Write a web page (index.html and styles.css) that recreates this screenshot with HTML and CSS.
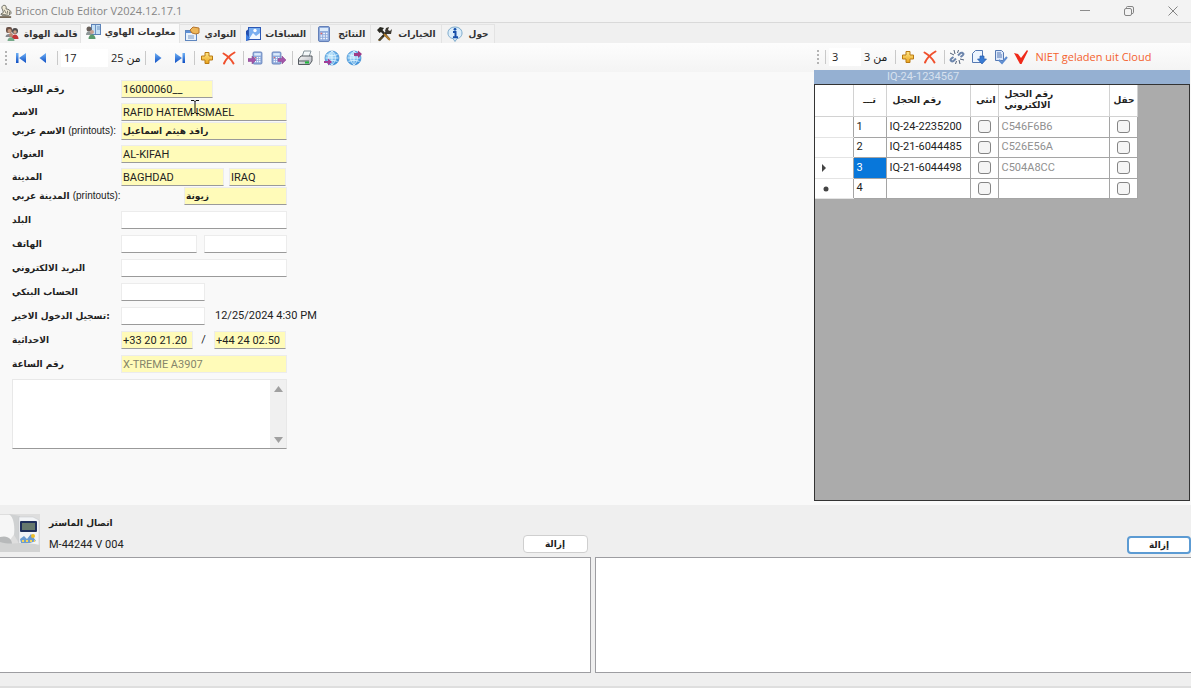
FILE: index.html
```html
<!DOCTYPE html>
<html lang="ar">
<head>
<meta charset="utf-8">
<title>Bricon Club Editor V2024.12.17.1</title>
<link rel="stylesheet" href="styles.css">
</head>
<body>
<svg class="defs" aria-hidden="true">
  <defs>
    <linearGradient id="blue" x1="0" y1="0" x2="0" y2="1"><stop offset="0" stop-color="#6fb1f5"/><stop offset="1" stop-color="#0f4fc4"/></linearGradient>
    <linearGradient id="gold" x1="0" y1="0" x2="0" y2="1"><stop offset="0" stop-color="#ffe888"/><stop offset="1" stop-color="#e9a31c"/></linearGradient>
    <radialGradient id="sky" cx=".4" cy=".35" r=".7"><stop offset="0" stop-color="#c4ecff"/><stop offset="1" stop-color="#2c86d8"/></radialGradient>
    <linearGradient id="grey" x1="0" y1="0" x2="1" y2="1"><stop offset="0" stop-color="#fafafa"/><stop offset="1" stop-color="#aeb2ba"/></linearGradient>
  </defs>
  <symbol id="plus" viewBox="0 0 16 16"><path d="M6 2.500h4V6h3.500v4H10v3.500H6V10H2.500V6H6z" fill="url(#gold)" stroke="#b97a14"/></symbol>
  <symbol id="cross" viewBox="0 0 16 16"><path d="M2.500 3.500C6 5.500 10 9 12.500 13.500M13.500 2.500C9 5 5 9 3 13.500" fill="none" stroke="#f0502d" stroke-width="2" stroke-linecap="round"/></symbol>
  <symbol id="calc" viewBox="0 0 16 16"><rect x="2.500" y=".5" width="11" height="15" rx="1.500" fill="#8fabdc" stroke="#6480b8"/><rect x="4" y="2" width="8" height="3" fill="#dcebfb"/><path d="M4.500 7.500h7M4.500 10h7M4.500 12.500h7" stroke="#f5f8ff" stroke-width="1.500" stroke-dasharray="1.700 1"/><path d="M4.500 7.500h1.700" stroke="#d66" stroke-width="1.500"/></symbol>
  <symbol id="globe" viewBox="0 0 16 16"><circle cx="8" cy="8" r="7" fill="url(#sky)" stroke="#3b8bd0" stroke-width=".7"/><path d="M1.500 8h13M8 1v14M2.500 4.500c3 1.500 8 1.500 11 0M2.500 11.500c3-1.500 8-1.500 11 0M8 1c-4.500 4-4.500 10 0 14M8 1c4.500 4 4.500 10 0 14" fill="none" stroke="#e3f6ff" stroke-width=".8"/></symbol>
  <symbol id="people" viewBox="0 0 16 16"><rect x="2" y="1" width="6" height="6" rx="2" fill="#6b5147"/><circle cx="5.500" cy="5" r="2" fill="#c79a80"/><path d="M1.500 11c0-4 7-4 7 0z" fill="#85868c"/><circle cx="11" cy="5" r="3" fill="#4d4a4b"/><circle cx="11" cy="6" r="1.700" fill="#cfa288"/><path d="M7.500 13c0-6 7-6 7 0z" fill="#c33436"/><circle cx="7" cy="9" r="2" fill="#b98570"/><path d="M3.500 15c0-5 7-5 7 0z" fill="#77a98a"/></symbol>
</svg>

<header class="titlebar">
  <svg class="app-icon" viewBox="0 0 14 16"><path d="M3 6C1 3 3 0 6 1c2 1 1 3 1 4 3 0 6 2 6 5l-3 3H3L1 11l3-2z" fill="#f0ead6" stroke="#55564f"/><path d="M5 6l2 4M2 11l5 1M9 7l-1 5M11 8v4" stroke="#68675d"/><path d="M0 14.500h13" stroke="#6d5f4c" stroke-width="2"/></svg>
  <h1 class="title">Bricon Club Editor V2024.12.17.1</h1>
  <div class="window-buttons">
    <button class="win" aria-label="Minimize"><svg viewBox="0 0 12 12"><path d="M1 5.500h10" stroke="#8c8c8c" fill="none"/></svg></button>
    <button class="win" aria-label="Restore"><svg viewBox="0 0 12 12"><rect x="1.500" y="3.500" width="7" height="7" rx="1.500" fill="none" stroke="#858585"/><path d="M3.500 3V2.500q0-1 1-1H9q1.500 0 1.500 1.500v4.500q0 1-1.500 1" fill="none" stroke="#858585"/></svg></button>
    <button class="win" aria-label="Close"><svg viewBox="0 0 12 12"><path d="M1.500 1.500l9 9M10.500 1.500l-9 9" stroke="#858585" fill="none"/></svg></button>
  </div>
</header>

<nav class="tabs" role="tablist">
  <button class="tab snug" role="tab"><svg class="icon"><use href="#people"/></svg><span>قالمة الهواة</span></button>
  <button class="tab active" role="tab" aria-selected="true"><svg class="icon" viewBox="0 0 16 16"><rect x="6.500" y=".5" width="9" height="10" fill="#c5e0f5" stroke="#5d83b8"/><path d="M10.500 1v9M12 3h3M12 5h3" stroke="#6e94c4"/><circle cx="4" cy="5" r="2.500" fill="#675e58"/><path d="M1 11c0-5 6-5 6 0z" fill="#8e9697"/><circle cx="7" cy="8" r="2" fill="#c8a090"/><path d="M3.500 15c0-6 7-6 7 0z" fill="#5b9a6c"/></svg><span>معلومات الهاوي</span></button>
  <button class="tab" role="tab"><svg class="icon" viewBox="0 0 16 16"><rect x="1.500" y="4.500" width="11" height="10" fill="#e8f1fc" stroke="#5e86bf"/><path d="M2 6h10" stroke="#5d8fd6" stroke-width="2"/><path d="M4 10h6M4 12h6" stroke="#7b9bc7"/><path d="M6 4l3-3 6 1v5l-3 1-4-1z" fill="#edb65a" stroke="#b5742c"/></svg><span>النوادي</span></button>
  <button class="tab" role="tab"><svg class="icon" viewBox="0 0 16 16"><path d="M1 5l4-3v12l-4 1z" fill="#244fae"/><rect x="3.500" y="1.500" width="12" height="12" fill="#79aef0" stroke="#2b57b4"/><path d="M4 13l4-6 3 3 4-3v6z" fill="#f0f7ff"/><circle cx="10" cy="4.500" r="1.700" fill="#fff"/><path d="M1 8l4 4-4 3z" fill="#3b7de2"/></svg><span>السباقات</span></button>
  <button class="tab roomy" role="tab"><svg class="icon"><use href="#calc"/></svg><span>النتائج</span></button>
  <button class="tab roomy" role="tab"><svg class="icon" viewBox="0 0 16 16"><path d="M3 14.500L12 5" stroke="#2b2b23" stroke-width="2.500"/><path d="M1 4l3-3 4 1-1.500 2L14 12.500 12.500 14 5 6 3.500 7z" fill="#292821"/><path d="M10 2l3-1-1 3 2 1 2-2-1 5-4 0-2-3z" fill="#3c3830"/><path d="M8 8l6 6" stroke="#b57f2d" stroke-width="2"/><path d="M2.500 15l4-4" stroke="#866524"/></svg><span>الخيارات</span></button>
  <button class="tab roomy" role="tab"><svg class="icon" viewBox="0 0 16 16"><path d="M8 1c9 0 9 11 2 11.500L8 15.500 6 12.500C-1 12-1 1 8 1z" fill="#dceefb" stroke="#7ca9cb"/><path d="M6 6h2.500v5M6 11.200h5" stroke="#174faa" stroke-width="2" fill="none"/><circle cx="8" cy="3.300" r="1.400" fill="#174faa"/></svg><span>حول</span></button>
</nav>

<main class="workspace">
  <section class="member">
    <div class="toolbar">
      <i class="grip"></i>
      <button class="tool" aria-label="First"><svg class="icon" viewBox="0 0 16 16"><path d="M3 3h2.500v10H3zM13 3v10L6 8z" fill="url(#blue)"/></svg></button>
      <button class="tool" aria-label="Previous"><svg class="icon" viewBox="0 0 16 16"><path d="M11 3v10L4.500 8z" fill="url(#blue)"/></svg></button>
      <i class="sep"></i>
      <input class="position wide" aria-label="Position" value="17">
      <span class="count">25 من</span>
      <i class="sep"></i>
      <button class="tool" aria-label="Next"><svg class="icon" viewBox="0 0 16 16"><path d="M5 3v10l6.500-5z" fill="url(#blue)"/></svg></button>
      <button class="tool" aria-label="Last"><svg class="icon" viewBox="0 0 16 16"><path d="M10.500 3H13v10h-2.500zM3 3v10l7-5z" fill="url(#blue)"/></svg></button>
      <i class="sep"></i>
      <button class="tool" aria-label="Add"><svg class="icon"><use href="#plus"/></svg></button>
      <button class="tool" aria-label="Delete"><svg class="icon"><use href="#cross"/></svg></button>
      <i class="sep"></i>
      <button class="tool" aria-label="Import"><svg class="icon" viewBox="0 0 16 16"><svg x="3" width="13" height="16"><use href="#calc"/></svg><path d="M0 8.500h4V6l4 4-4 4v-2.500H0z" fill="#a455a8" stroke="#874391" stroke-width=".5"/></svg></button>
      <button class="tool" aria-label="Export"><svg class="icon" viewBox="0 0 16 16"><svg width="13" height="16"><use href="#calc"/></svg><path d="M8 8.500h4V6l4 4-4 4v-2.500H8z" fill="#a455a8" stroke="#874391" stroke-width=".5"/></svg></button>
      <i class="sep"></i>
      <button class="tool" aria-label="Print"><svg class="icon" viewBox="0 0 16 16"><path d="M5 7l2-6h7l-2 6z" fill="#f4f8fa" stroke="#86949b"/><path d="M1.500 9L4 6h11v5l-2.500 3.500h-11z" fill="url(#grey)" stroke="#555b61"/><path d="M2 11h10" stroke="#555b61"/><path d="M8 12.500h4" stroke="#20b93a" stroke-width="2"/></svg></button>
      <i class="sep"></i>
      <button class="tool" aria-label="Download"><svg class="icon" viewBox="0 0 16 16"><use href="#globe"/><path d="M0 11h4V8.500L8 12l-4 3.500V13H0z" fill="#a03c96"/></svg></button>
      <button class="tool" aria-label="Upload"><svg class="icon" viewBox="0 0 16 16"><use href="#globe"/><path d="M8 3h4V.5L16 4l-4 4V6H8z" fill="#a03c86"/></svg></button>
    </div>

    <form class="form">
      <div class="rows upper">
        <div class="row"><label for="f1">رقم اللوفت</label><input id="f1" class="w-92 filled" value="16000060__"></div>
        <div class="pair">
          <div class="row"><label for="f2">الاسم</label><span class="field"><input id="f2" class="w-166 filled" value="RAFID HATEM ISMAEL"><svg class="caret" viewBox="0 0 10 16"><path d="M1 1.500h3l1 1 1-1h3M5 2v12M1 14.500h3l1-1 1 1h3" fill="none" stroke="#111"/></svg></span></div>
          <div class="row"><label for="f3">الاسم عربي <span class="latin">(printouts):</span></label><input id="f3" class="w-166 filled arabic" value="رافد هيثم اسماعيل"></div>
        </div>
        <div class="row"><label for="f4">العنوان</label><input id="f4" class="w-166 filled" value="AL-KIFAH"></div>
        <div class="pair">
          <div class="row"><label for="f5">المدينة</label><input id="f5" class="w-103 filled" value="BAGHDAD"><input class="w-57 push-near filled" aria-label="Country" value="IRAQ"></div>
          <div class="row"><label for="f6">المدينة عربي <span class="latin">(printouts):</span></label><input id="f6" class="w-103 push-town filled arabic" value="زيونة"></div>
        </div>
      </div>
      <div class="rows lower">
        <div class="row"><label for="f7">البلد</label><input id="f7" class="w-166"></div>
        <div class="row"><label for="f8">الهاتف</label><input id="f8" class="w-76"><input class="w-83 push" aria-label="Phone 2"></div>
        <div class="row"><label for="f9">البريد الالكتروني</label><input id="f9" class="w-166"></div>
        <div class="row"><label for="f10">الحساب البنكي</label><input id="f10" class="w-84"></div>
        <div class="row"><label for="f11">تسجيل الدخول الاخير:</label><input id="f11" class="w-84"><time class="stamp">12/25/2024 4:30 PM</time></div>
        <div class="row"><label for="f12">الاحداثية</label><input id="f12" class="w-72 filled" value="+33 20 21.20"><span class="slash">/</span><input class="w-72 filled" aria-label="Longitude" value="+44 24 02.50"></div>
        <div class="row"><label for="f13">رقم الساعة</label><input id="f13" class="w-166 filled off" value="X-TREME A3907" disabled></div>
        <div class="notes"><textarea aria-label="Notes"></textarea><div class="scroll"><svg viewBox="0 0 9 6"><path d="M4.500 0L9 6H0z" fill="#a0a0a0"/></svg><svg viewBox="0 0 9 6"><path d="M4.500 6L9 0H0z" fill="#a0a0a0"/></svg></div></div>
      </div>
    </form>
  </section>

  <section class="rings">
    <div class="toolbar right">
      <i class="grip"></i><i class="sep"></i>
      <input class="position" aria-label="Ring position" value="3">
      <span class="count">3 من</span>
      <i class="sep"></i>
      <button class="tool" aria-label="Add ring"><svg class="icon"><use href="#plus"/></svg></button>
      <button class="tool" aria-label="Delete ring"><svg class="icon"><use href="#cross"/></svg></button>
      <i class="sep"></i>
      <button class="tool" aria-label="Unlink"><svg class="icon" viewBox="0 0 16 16"><path d="M7 9.500L4.500 12q-2 1-3-1 0-1 3-3M9 6.500L11.500 4q2-1 3 1 0 1-3 3" fill="none" stroke="#6d86ad" stroke-width="2"/><path d="M5 1l1 4M9.500 1l-1 3M1 4l4 2M15 11l-4-1M11 15l-1-4M6.500 15l1-3" stroke="#526078"/></svg></button>
      <button class="tool" aria-label="Save ring"><svg class="icon" viewBox="0 0 16 16"><path d="M4.500 1.500h7v12h-10v-9z" fill="#edf5ff" stroke="#5579b3"/><path d="M9 7h4v3h2.500L11 15l-4.500-5H9z" fill="#397bd4" stroke="#285caa" stroke-width=".7"/></svg></button>
      <button class="tool" aria-label="Check ring"><svg class="icon" viewBox="0 0 16 16"><path d="M2.500 1.500h6l2 2v8h-8z" fill="#dce7fa" stroke="#5579b3"/><path d="M4 4h4M4 6h5M4 8h5" stroke="#5579b3"/><path d="M6 11l3 3 5-6" fill="none" stroke="#5d8cd0" stroke-width="2"/></svg></button>
      <button class="cloud"><svg class="icon" viewBox="0 0 16 16"><path d="M1 4l4 1 3 4 6-8 1 1-6.500 13H7z" fill="#ef2a1a"/></svg><span>NIET geladen uit Cloud</span></button>
    </div>
    <div class="banner">IQ-24-1234567</div>
    <div class="grid-area">
      <table class="grid">
        <colgroup><col class="c-head"><col class="c-no"><col class="c-ring"><col class="c-check"><col class="c-chip"><col class="c-check"></colgroup>
        <thead><tr><th></th><th class="mid">تـــ</th><th class="inset">رقم الحجل</th><th class="end">انثى</th><th class="inset">رقم الحجل<br>الالكتروني</th><th class="end">حقل</th></tr></thead>
        <tbody>
          <tr><td class="mark"></td><td>1</td><td>IQ-24-2235200</td><td class="box"><input type="checkbox" aria-label="Hen 1"></td><td class="chip">C546F6B6</td><td class="box"><input type="checkbox" aria-label="Field 1"></td></tr>
          <tr><td class="mark"></td><td>2</td><td>IQ-21-6044485</td><td class="box"><input type="checkbox" aria-label="Hen 2"></td><td class="chip">C526E56A</td><td class="box"><input type="checkbox" aria-label="Field 2"></td></tr>
          <tr><td class="mark"><svg viewBox="0 0 10 10"><path d="M3 1l4 4-4 4z" fill="#444"/></svg></td><td class="selected">3</td><td>IQ-21-6044498</td><td class="box"><input type="checkbox" aria-label="Hen 3"></td><td class="chip">C504A8CC</td><td class="box"><input type="checkbox" aria-label="Field 3"></td></tr>
          <tr><td class="mark"><svg viewBox="0 0 10 10"><circle cx="7" cy="6" r="2.500" fill="#444"/></svg></td><td>4</td><td></td><td class="box"><input type="checkbox" aria-label="Hen 4"></td><td class="chip"></td><td class="box"><input type="checkbox" aria-label="Field 4"></td></tr>
        </tbody>
      </table>
    </div>
  </section>
</main>

<footer class="master">
  <div class="half">
    <div class="master-head">
      <svg class="device" viewBox="0 0 40 38"><rect width="40" height="38" fill="#dedede"/><path d="M0 1h10c4 3 6 9 5 18L8 29H0z" fill="#f6f6f6"/><path d="M9 0c5 3 6 14 5 21l6 10V2z" fill="#cfd1d2"/><path d="M19 3h14l6 3v26H19z" fill="#f2f4f6" stroke="#c2c6cb" stroke-width=".5"/><path d="M0 23c7-2 13 1 12 10L0 29z" fill="#b7b9ba"/><path d="M0 28c14 4 19-2 40 3v7H0z" fill="#d2d3d3"/><rect x="20" y="7" width="17" height="11" rx="1" fill="#20305c"/><rect x="22" y="9" width="13" height="7" fill="#66786d"/><path d="M20 25l4-3 3 3 4-5 5 7-6 2h-9z" fill="#6c9cd0"/><circle cx="33" cy="22" r="2" fill="#ecbd2c"/><path d="M22 27h13" stroke="#f7d455" stroke-width="2" stroke-dasharray="2 2"/></svg>
      <div class="master-text"><div class="arabic">اتصال الماستر</div><div>M-44244 V 004</div></div>
      <button class="remove">إزالة</button>
    </div>
    <div class="list first"></div>
  </div>
  <div class="half second">
    <div class="master-head"><button class="remove focus">إزالة</button></div>
    <div class="list"></div>
  </div>
  <div class="status"></div>
</footer>
</body>
</html>
```
FILE: styles.css
```css
* { box-sizing: border-box; }
html, body { height: 100%; }
body {
  margin: 0;
  display: flex;
  flex-direction: column;
  overflow: hidden;
  background: #f9f9f9;
  color: #222;
  font: 11px/16px "Roboto", "DejaVu Sans", sans-serif;
}
button, input, textarea { font: inherit; color: inherit; margin: 0; padding: 0; border: 0; background: none; border-radius: 0; }
.defs { position: absolute; width: 0; height: 0; }
.icon { width: 16px; height: 16px; flex: none; display: block; }

.titlebar { flex: none; display: flex; align-items: center; height: 23px; background: #f3f3f3; border-bottom: 1px solid #d9d9d9; }
.app-icon { width: 12px; height: 15px; }
.title { margin: 0 0 0 3px; font: 11px/20px "Open Sans", sans-serif; color: #858585; flex: 1; }
.window-buttons { display: flex; align-items: center; gap: 20px; padding-right: 6px; }
.win { width: 24px; height: 20px; display: flex; align-items: center; justify-content: center; }
.win svg { width: 12px; height: 12px; }

.tabs { flex: none; display: flex; align-items: flex-end; height: 20px; background: #f0f0f0; }
.tab { display: flex; align-items: center; gap: 4px; height: 19px; padding: 0 4px; background: #f2f2f2; border: 1px solid #e3e3e3; border-left: 0; border-bottom: 0; font: bold 9px/16px "DejaVu Sans", sans-serif; color: #333; white-space: nowrap; }
.tab.snug { padding-right: 2px; }
.tab.roomy { gap: 6px; padding: 0 5px; }
.tab.active { height: 20px; background: #fafafa; padding-bottom: 3px; }

.workspace { flex: 1; display: flex; min-height: 0; }
.member { flex: 1; min-width: 0; }
.rings { flex: 0 0 377px; display: flex; flex-direction: column; padding-right: 1px; }
.toolbar { display: flex; align-items: center; height: 29px; padding-left: 5px; background: linear-gradient(#fdfdfd, #f4f4f4); }
.grip { width: 3px; height: 14px; margin-right: 2px; background: repeating-linear-gradient(#b4b4b4 0 2px, transparent 2px 4px) 0 0 / 2px 100% no-repeat; }
.tool { width: 22px; height: 22px; display: flex; align-items: center; justify-content: center; }
.sep { width: 1px; height: 14px; margin: 0 1px 0 3px; background: #c9c9c9; }
.position { width: 32px; height: 18px; background: #fff; padding-left: 3px; font: 11px/16px "Open Sans", sans-serif; }
.position.wide { width: 47px; margin-left: 2px; }
.count { padding: 0 1px 0 3px; font: 11px/16px "Open Sans", "DejaVu Sans", sans-serif; white-space: nowrap; }
.right { height: 27px; padding-left: 3px; }
.right .position { margin-left: 2px; }
.right .count { padding-right: 5px; }
.cloud { display: flex; align-items: center; gap: 6px; padding-left: 1px; color: #f4622e; font: 11px/16px "Open Sans", sans-serif; white-space: nowrap; }

.form { padding: 8px 12px 0; }
.rows { display: flex; flex-direction: column; gap: 5px; }
.lower { gap: 6px; margin-top: 6px; }
.pair { display: flex; flex-direction: column; gap: 1px; }
.row { display: flex; align-items: center; height: 18px; }
.row label { width: 109px; flex: none; font: bold 9px/16px "DejaVu Sans", sans-serif; white-space: nowrap; }
.row label .latin { font: 10px/16px "Liberation Sans", sans-serif; }
.row input { height: 18px; padding-left: 1px; background: #fff; border: 1px solid #ececec; border-bottom: 1px solid #9a9a9a; }
.row input.filled { background: #fffbb9; }
.row input.off { color: #85856b; border-bottom-color: #ececec; }
.row input.arabic { font: bold 9px/16px "DejaVu Sans", sans-serif; }
.field { position: relative; display: flex; }
.caret { position: absolute; left: 69px; top: -4px; width: 10px; height: 16px; }
.w-166 { width: 166px; }
.w-103 { width: 103px; }
.w-92 { width: 92px; }
.w-84 { width: 84px; }
.w-83 { width: 83px; }
.w-76 { width: 76px; }
.w-72 { width: 72px; }
.w-57 { width: 57px; }
.push { margin-left: 7px; }
.push-near { margin-left: 5px; }
.push-town { margin-left: 63px; }
.stamp { margin-left: 10px; }
.slash { width: 21px; text-align: center; }
.notes { display: flex; width: 275px; height: 70px; background: #fff; border: 1px solid #e8e8e8; border-bottom-color: #999; }
.notes textarea { flex: 1; resize: none; outline: 0; }
.scroll { width: 16px; background: #f0f0f0; display: flex; flex-direction: column; align-items: center; justify-content: space-between; padding: 6px 0 5px; }
.scroll svg { width: 9px; height: 6px; }

.banner { height: 14px; padding-left: 73px; background: #95b0d2; color: #d7e1ee; line-height: 13px; }
.grid-area { flex: 1; margin-bottom: 4px; background: #ababab; border: 1px solid #333; }
.grid { border-collapse: collapse; table-layout: fixed; width: 322px; background: #fff; }
.c-head { width: 38px; }
.c-no { width: 33px; }
.c-ring { width: 84px; }
.c-check { width: 28px; }
.c-chip { width: 111px; }
.grid th { height: 31px; padding: 0 2px; border: 1px solid #d2d2d2; border-width: 0 1px 1px 0; font: bold 9px/11px "DejaVu Sans", sans-serif; text-align: left; white-space: nowrap; }
.grid th.mid { text-align: center; }
.grid th.inset { padding-left: 6px; }
.grid th.end { text-align: right; padding: 0 2px; }
.grid td { height: 21px; padding: 0 3px; border: 1px solid #a5a5a5; border-width: 0 1px 1px 0; line-height: 16px; }
.grid tr:nth-child(even) td { height: 20px; }
.grid td.mark { border-bottom-color: #e4e4e4; padding: 0 4px; }
.mark svg { width: 10px; height: 10px; display: block; }
.grid td.box { padding: 0; text-align: center; }
.box input { appearance: none; display: block; width: 13px; height: 13px; margin: 0 auto; background: #f5f5f5; border: 1px solid #858585; border-radius: 3px; }
.grid .chip { color: #909090; }
.grid .selected { background: #0877da; color: #fff; }

.master { flex: none; display: flex; flex-wrap: wrap; column-gap: 4px; background: #efefef; }
.half { width: calc(50% - 5px); }
.second { width: auto; flex: 1; }
.master-head { display: flex; align-items: flex-end; height: 52px; padding-right: 3px; }
.second .master-head { padding: 0; }
.device { width: 40px; height: 38px; margin-bottom: 5px; }
.master-text { flex: 1; padding: 0 0 2px 9px; line-height: 21px; }
.master-text .arabic { font: bold 9px/21px "DejaVu Sans", sans-serif; }
.remove { width: 65px; height: 18px; margin-bottom: 4px; background: #fff; border: 1px solid #cfcfcf; border-radius: 4px; font: bold 9px/14px "DejaVu Sans", sans-serif; }
.remove.focus { width: 64px; margin: 0 0 3px auto; border: 2px solid #5c9bd3; }
.list { height: 116px; background: #fff; border: 1px solid #9d9da1; border-right: 0; }
.list.first { border-left: 0; border-right: 1px solid #9d9da1; }
.status { width: 100%; height: 15px; border-bottom: 2px solid #dedede; }
```
